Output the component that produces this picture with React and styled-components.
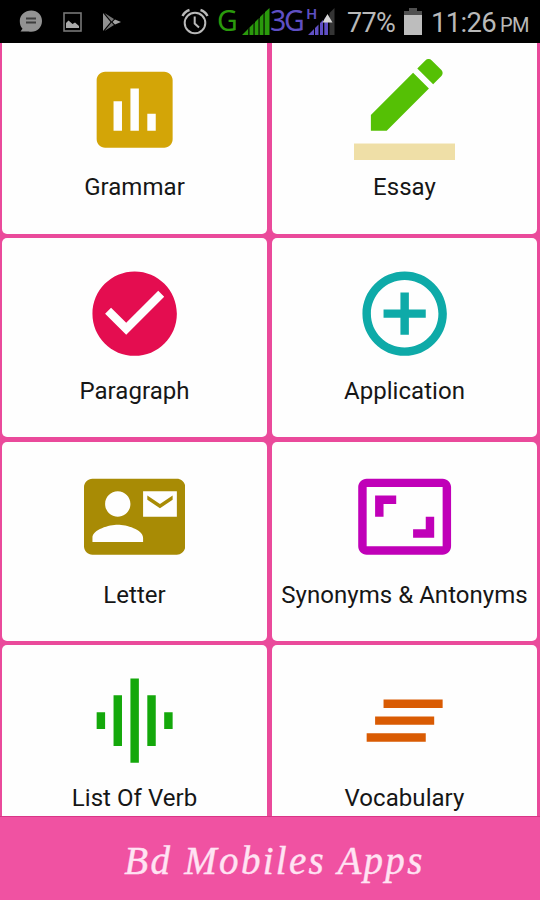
import React from "react";
import styled, { createGlobalStyle } from "styled-components";

const COLORS = {
  pink: "#f052a2",
  pinkLine: "#ea4a9b",
  pinkDark: "#d93687",
  white: "#fefefe",
  text: "#161616",
  status: "#b9b9b9",
  statusDim: "#929292",
  green: "#2a9a0c",
  violet: "#5f4fc4",
};

const TILES = [
  {
    label: "Grammar",
    color: "#d3a507",
    path: "M19 3H5c-1.1 0-2 .9-2 2v14c0 1.1.9 2 2 2h14c1.1 0 2-.9 2-2V5c0-1.1-.9-2-2-2zM9 17H7v-7h2v7zm4 0h-2V7h2v10zm4 0h-2v-4h2v4z",
  },
  {
    label: "Essay",
    color: "#55c005",
    path: "M17.75 7L14 3.25l-10 10V17h3.75l10-10zm2.96-2.96c.39-.39.39-1.02 0-1.41L18.37.29c-.39-.39-1.02-.39-1.41 0L15 2.25 18.75 6l1.96-1.96z",
    underline: "#efdfa7",
  },
  {
    label: "Paragraph",
    color: "#e40d50",
    path: "M12 2C6.48 2 2 6.48 2 12s4.48 10 10 10 10-4.48 10-10S17.52 2 12 2zm-2 15l-5-5 1.41-1.41L10 14.17l7.59-7.59L19 8l-9 9z",
  },
  {
    label: "Application",
    color: "#0eaaa8",
    path: "M13 7h-2v4H7v2h4v4h2v-4h4v-2h-4V7zm-1-5C6.49 2 2 6.49 2 12s4.49 10 10 10 10-4.49 10-10S17.51 2 12 2zm0 18c-4.41 0-8-3.59-8-8s3.59-8 8-8 8 3.59 8 8-3.59 8-8 8z",
  },
  {
    label: "Letter",
    color: "#a88b05",
    path: "M21 8V7l-3 2-3-2v1l3 2 3-2zm1-5H2C.9 3 0 3.9 0 5v14c0 1.1.9 2 2 2h20c1.1 0 1.99-.9 1.99-2L24 5c0-1.1-.9-2-2-2zM8 6c1.66 0 3 1.34 3 3s-1.34 3-3 3-3-1.34-3-3 1.34-3 3-3zm6 12H2v-1c0-2 4-3.1 6-3.1s6 1.1 6 3.1v1zm8-6h-8V6h8v6z",
  },
  {
    label: "Synonyms & Antonyms",
    color: "#c000b8",
    path: "M19 12h-2v3h-3v2h5v-5zM7 9h3V7H5v5h2V9zm14-6H3c-1.1 0-2 .9-2 2v14c0 1.1.9 2 2 2h18c1.1 0 2-.9 2-2V5c0-1.1-.9-2-2-2zm0 16.01H3V4.99h18v14.02z",
  },
  {
    label: "List Of Verb",
    color: "#14a80b",
    path: "M7 18h2V6H7v12zm4 4h2V2h-2v20zm-8-8h2v-4H3v4zm12 4h2V6h-2v12zm4-8v4h2v-4h-2z",
  },
  {
    label: "Vocabulary",
    color: "#d95b03",
    path: "M5 13h14v-2H5v2zm-2 4h14v-2H3v2zM7 7v2h14V7H7z",
  },
];

const NotificationIcons = () => (
  <Notifications>
    <svg width="24" height="26" viewBox="0 0 24 26">
      <path
        d="M12.3 1.5C18.5 1.5 23 6 23 12s-4.500 10.800-10.700 10.800c-1 0-1.900-.1-2.700-.3H1.500l2-2.800C1.500 17.700.8 15 .8 12 .8 6 6 1.500 12.300 1.500z"
        fill={COLORS.statusDim}
      />
      <path d="M7 9.500h10M7 13.500h10" stroke="#3d3d3d" strokeWidth="1.900" />
    </svg>
    <svg width="19" height="20" viewBox="0 0 19 20">
      <rect x="1" y="1" width="17" height="18" fill="none" stroke="#777" strokeWidth="1.600" />
      <path d="M3 16v-5l2.500-2.500 4 3.500 2.500-1.500 4 3.500v2z" fill="#aaa" />
    </svg>
    <svg width="20" height="20" viewBox="0 0 20 20">
      <path d="M1 1v18l7.500-9z" fill={COLORS.statusDim} />
      <path d="M2.500 1l9.500 6-2.500 2.500zM2.500 19l9.500-6-2.500-2.500z" fill="#747474" />
      <path d="M13 7.500l6 2.500-6 2.500-2.500-2.500z" fill="#a5a5a5" />
    </svg>
  </Notifications>
);

const AlarmIcon = () => (
  <svg width="28" height="28" viewBox="0 0 28 28" fill="none" stroke={COLORS.status} strokeWidth="2">
    <circle cx="14" cy="15" r="10.300" />
    <path d="M13.700 8.500V15.500l4.300 4" />
    <path d="M1.500 8C3 5 5 3 8.500 2M26.500 8C25 5 23 3 19.500 2" strokeWidth="2.400" />
  </svg>
);

const SignalIcon = () => (
  <svg width="28" height="27" viewBox="0 0 28 27">
    <path d="M0 27L6 21V27zM7.500 27V19.500L11.500 15.500V27zM13 27V14L16.500 10.500V27zM18 27V9L21.500 5.500V27zM23 27V4L27.500 0V27z" fill={COLORS.green} />
    <path d="M7 27V20M12.300 27V15M17.300 27V10M22.300 27V5" stroke="#174c08" />
  </svg>
);

const DataSignalIcon = () => (
  <svg width="27" height="27" viewBox="0 0 27 27">
    <path d="M0 27L6 21V27zM7 27V20L10.500 16.500V27zM12 27V15L15 12V27zM16.300 27V11L20 7V27z" fill={COLORS.violet} />
    <path d="M21.500 27V5L26.500 0V27z" fill="#343434" />
    <path d="M14.500 14.500L19.500 6l5 8.500z" fill="#d6d6d6" />
  </svg>
);

const BatteryIcon = () => (
  <svg width="18" height="27" viewBox="0 0 18 27">
    <path d="M5 0h8v3h5v4H0V3h5z" fill="#505050" />
    <path d="M0 7h18v20H0z" fill="#bdbdbd" />
  </svg>
);

const StatusBar = () => (
  <StyledStatusBar>
    <NotificationIcons />
    <Alarm>
      <AlarmIcon />
    </Alarm>
    <Network color={COLORS.green} $width={25}>G</Network>
    <Signal>
      <SignalIcon />
    </Signal>
    <Network color={COLORS.violet} $width={36}>3G</Network>
    <DataSignal>
      <NetworkType>H</NetworkType>
      <DataSignalIcon />
    </DataSignal>
    <Battery>77%</Battery>
    <Signal>
      <BatteryIcon />
    </Signal>
    <Clock>
      11:26<Meridiem>PM</Meridiem>
    </Clock>
  </StyledStatusBar>
);

const Tile = ({ label, color, path, underline }) => (
  <StyledTile>
    <TileIcon viewBox="0 0 24 24">
      <path d={path} fill={color} />
      {underline && <path d="M0 20h24v4H0z" fill={underline} />}
    </TileIcon>
    <TileLabel>{label}</TileLabel>
  </StyledTile>
);

const App = () => (
  <Screen>
    <GlobalStyle />
    <StatusBar />
    <Content>
      <Grid>
        {TILES.map((tile) => (
          <Tile key={tile.label} {...tile} />
        ))}
      </Grid>
    </Content>
    <Footer>
      <Brand>Bd Mobiles Apps</Brand>
    </Footer>
  </Screen>
);

const GlobalStyle = createGlobalStyle`
  * {
    box-sizing: border-box;
  }
  body {
    margin: 0;
    overflow: hidden;
  }
  svg {
    display: block;
    flex-shrink: 0;
  }
`;

const Screen = styled.div`
  display: flex;
  flex-direction: column;
  width: 540px;
  height: 900px;
  background: ${COLORS.pinkLine};
  font-family: Roboto, "Liberation Sans", sans-serif;
`;

// Status bar
const StyledStatusBar = styled.header`
  display: flex;
  flex-shrink: 0;
  height: 43px;
  background: #000;
  color: ${COLORS.status};
  white-space: nowrap;
`;
const Notifications = styled.div`
  display: flex;
  align-items: center;
  gap: 20px;
  width: 181px;
  padding: 1px 0 0 19px;
`;
const Alarm = styled.div`
  width: 36px;
  padding-top: 8px;
`;
const Network = styled.span`
  width: ${({ $width }) => $width}px;
  color: ${({ color }) => color};
  font-family: "Noto Sans", sans-serif;
  font-size: 28.5px;
  line-height: 41px;
  letter-spacing: -2.2px;
`;
const Signal = styled.div`
  padding-top: 8px;
`;
const DataSignal = styled.div`
  position: relative;
  width: 41px;
  padding: 8px 0 0 2px;
`;
const NetworkType = styled.span`
  position: absolute;
  left: 0;
  top: 5px;
  color: ${COLORS.violet};
  font-family: "Noto Sans", sans-serif;
  font-size: 15px;
  line-height: 16px;
  font-weight: 600;
`;
const Battery = styled.span`
  width: 57px;
  font-size: 27px;
  line-height: 46px;
  letter-spacing: -0.7px;
`;
const Clock = styled.span`
  margin-left: 9px;
  font-size: 27.5px;
  line-height: 46px;
  letter-spacing: -0.7px;
`;
const Meridiem = styled.span`
  margin-left: 4px;
  font-size: 20px;
  letter-spacing: -0.7px;
`;

// Category tiles
const Content = styled.main`
  flex: 1;
  min-height: 0;
  overflow: hidden;
`;
const Grid = styled.div`
  display: grid;
  grid-template-columns: 265px 265px;
  grid-auto-rows: 199.2px;
  gap: 4.4px 5px;
  margin: -8.4px 0 0 2px;
`;
const StyledTile = styled.section`
  display: flex;
  flex-direction: column;
  align-items: center;
  padding-top: 24.5px;
  border-radius: 5px;
  background: ${COLORS.white};
`;
const TileIcon = styled.svg`
  width: 101.3px;
  height: 101.3px;
`;
const TileLabel = styled.span`
  margin-top: 12px;
  color: ${COLORS.text};
  font-size: 24px;
  line-height: 30px;
  letter-spacing: 0.05px;
  white-space: nowrap;
`;

// Footer banner
const Footer = styled.footer`
  display: flex;
  flex-shrink: 0;
  justify-content: center;
  height: 84px;
  border-top: 1px solid ${COLORS.pinkDark};
  background: ${COLORS.pink};
`;
const Brand = styled.span`
  padding-left: 9px;
  color: #ffe3f3;
  font-family: "Monotype Corsiva", "Liberation Serif", serif;
  font-size: 39px;
  font-style: italic;
  line-height: 88px;
  letter-spacing: 2.3px;
  -webkit-text-stroke: 0.4px #ffe3f3;
  white-space: nowrap;
`;

export default App;
